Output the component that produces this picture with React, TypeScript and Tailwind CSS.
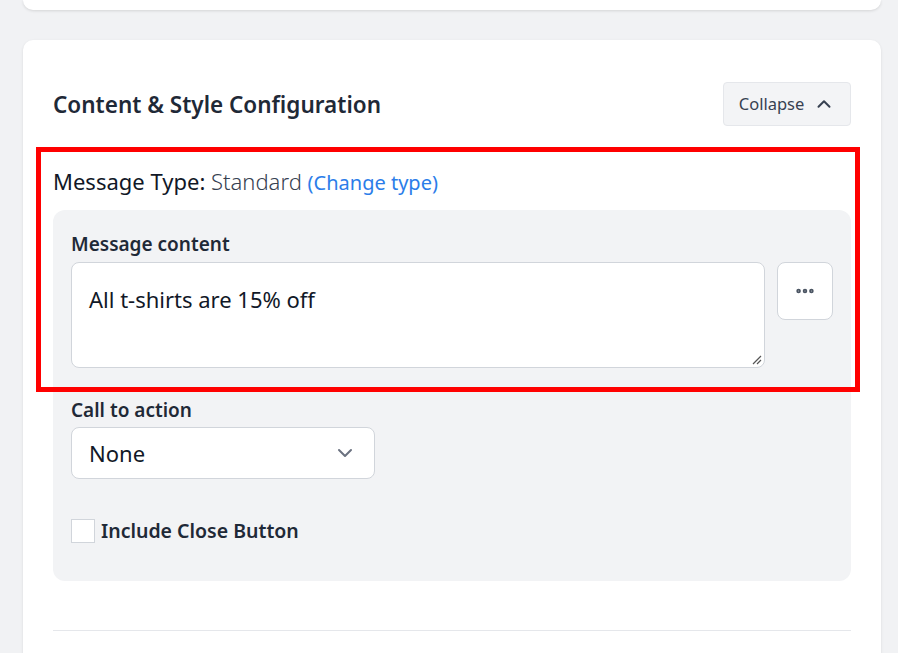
import { ChevronDown, ChevronUp, MoreHorizontal } from "lucide-react";

export default function App() {
  return (
    <div
      className="relative min-h-screen w-[898px] h-[653px] overflow-hidden bg-[#f1f2f4] text-[#1f2937]"
      style={{ fontFamily: '"Noto Sans", "Open Sans", sans-serif' }}
    >
      {/* previous card, only its bottom edge is visible */}
      <div className="ml-[23px] w-[858px] h-[10px] rounded-b-[10px] bg-white shadow-[0_1px_3px_rgba(0,0,0,0.12)]" />

      <div className="ml-[23px] mt-[30px] w-[858px] rounded-[10px] bg-white px-[30px] pt-[42px] pb-[40px] shadow-[0_1px_3px_rgba(0,0,0,0.1)]">
        <div className="flex items-center justify-between h-[44px]">
          <h2 className="mt-[2px] text-[22.5px] font-semibold text-[#1f2937]">Content &amp; Style Configuration</h2>
          <button className="flex h-[44px] w-[128px] items-center justify-center gap-[9px] rounded-[4px] border border-[#e5e7eb] bg-[#f3f4f6] text-[16.5px] text-[#374151]">
            Collapse
            <ChevronUp size={22} strokeWidth={2.2} className="text-[#374151]" />
          </button>
        </div>

        <div className="mt-[41px] text-[22px] leading-[28px]">
          <span className="text-[#111827]">Message Type:</span>{" "}
          <span className="font-light text-[#374151]">Standard</span>{" "}
          <span className="text-[20px] text-[#2b7de9]">(Change type)</span>
        </div>

        <div className="mt-[13px] rounded-[12px] bg-[#f2f3f5] px-[18px] pt-[22px] pb-[38px]">
          <label className="block text-[19px] font-semibold leading-[24px] text-[#1f2937]">Message content</label>
          <div className="mt-[6px] flex items-start gap-[12px]">
            <div className="relative h-[106px] flex-1 rounded-[8px] border border-[#d1d5db] bg-white px-[17px] pt-[21px] text-[22px] leading-[30px] text-[#111827]">
              All t-shirts are 15% off
              <svg className="absolute right-[2px] bottom-[2px]" width="10" height="10" viewBox="0 0 10 10">
                <path d="M9 1 L1 9 M9 5 L5 9" stroke="#555" strokeWidth="1.2" />
              </svg>
            </div>
            <button className="flex h-[58px] w-[56px] items-center justify-center rounded-[8px] border border-[#d1d5db] bg-white text-[#4b5563]">
              <MoreHorizontal size={22} strokeWidth={3} />
            </button>
          </div>

          <label className="mt-[30px] block text-[19px] font-semibold leading-[24px] text-[#1f2937]">Call to action</label>
          <div className="mt-[5px] flex h-[52px] w-[304px] items-center justify-between rounded-[8px] border border-[#d1d5db] bg-white pl-[17px] pr-[17px] text-[22px] text-[#111827]">
            None
            <ChevronDown size={24} strokeWidth={2} className="text-[#6b7280]" />
          </div>

          <div className="mt-[40px] flex h-[24px] items-center gap-[6px]">
            <span className="h-[24px] w-[24px] border border-[#d1d5db] bg-white" />
            <span className="text-[19.5px] font-semibold leading-[24px] text-[#1f2937]">Include Close Button</span>
          </div>
        </div>

        <div className="mt-[49px] h-px bg-[#e5e7eb]" />
        <div className="h-[60px]" />
      </div>

      {/* red highlight annotation */}
      <div className="pointer-events-none absolute left-[36px] top-[147px] h-[245px] w-[824px] border-[5px] border-[#ff0000]" />
    </div>
  );
}
